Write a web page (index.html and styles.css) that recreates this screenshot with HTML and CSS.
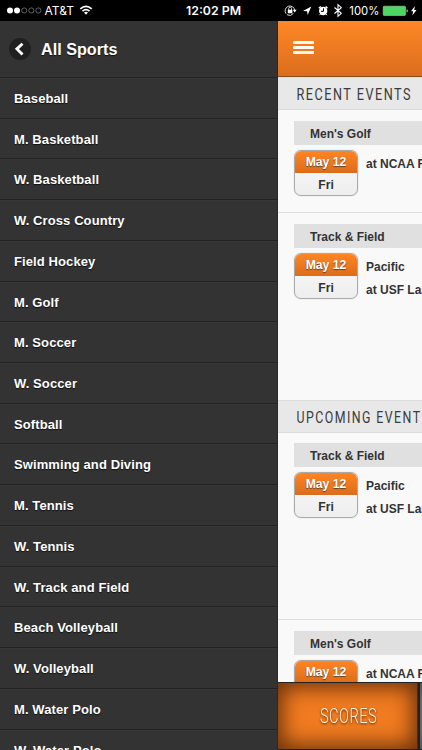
FILE: index.html
```html
<!DOCTYPE html>
<html lang="en">
<head>
<meta charset="utf-8">
<title>All Sports</title>
<link rel="stylesheet" href="styles.css">
</head>
<body>
<header class="status">
  <svg width="422" height="21" viewBox="0 0 422 21" fill="#fff" font-family="Inter, sans-serif" font-size="12">
    <circle cx="10" cy="10.500" r="3"/><circle cx="17" cy="10.500" r="3"/>
    <g fill="none" stroke="#777" stroke-width=".8"><circle cx="24.200" cy="10.500" r="2.600"/><circle cx="31.300" cy="10.500" r="2.600"/><circle cx="38.400" cy="10.500" r="2.600"/></g>
    <text x="44.500" y="15" textLength="29.500" lengthAdjust="spacingAndGlyphs">AT&amp;T</text>
    <g fill="none" stroke="#fff" stroke-width="1.700"><path d="M80.300 8.800Q86 3.800 91.700 8.800M82.500 11.100Q86 8.200 89.500 11.100"/></g>
    <path d="M84 12.500Q86 11 88 12.500L86 14.700Z"/>
    <text x="186" y="15" font-weight="600" textLength="55" lengthAdjust="spacingAndGlyphs">12:02 PM</text>
    <path d="M286 13.600A4.800 4.800 0 1 1 294.700 10.500M293.300 13.500A4.800 4.800 0 0 1 287 14.700" fill="none" stroke="#ddd"/>
    <path d="M292.800 9.800h3.800l-1.900 2.700z"/>
    <path d="M287.800 9.700h4.600v3.600h-4.600z"/><path d="M288.700 10V8.500a1.400 1.400 0 0 1 2.800 0V10" fill="none" stroke="#fff" stroke-width=".8"/>
    <path d="M303 11.100L311.300 6.600 307.700 15 307.100 11.200Z"/>
    <circle cx="323.200" cy="11" r="4.200"/><path d="M319 8.300L320.800 6.500M325.600 6.500L327.400 8.300" stroke="#fff" stroke-width="1.600"/><path d="M320.500 14L319.500 15.200M326 14L327 15.200" stroke="#fff" stroke-width="1"/>
    <path d="M323.500 8.300V11.300H321" fill="none" stroke="#000"/>
    <path d="M334.500 7.500L341.300 13.300 338 16.300V4.700L341.300 7.700 334.500 13.500" fill="none" stroke="#fff" stroke-width="1.100"/>
    <text x="349.300" y="15" textLength="30" lengthAdjust="spacingAndGlyphs">100%</text>
    <rect x="383.200" y="6.200" width="22.300" height="9.300" rx="1" fill="#4cd763" stroke="#b0e3b6" stroke-width=".5"/>
    <path d="M406.500 9.300Q408 9.500 408 11Q408 12.300 406.500 12.500Z" fill="#aaa"/>
    <path d="M415 6L411 11.300H413.200L412.300 15.500 416.500 10H414.200Z"/>
  </svg>
</header>
<main class="app">
  <nav class="menu">
    <div class="menu-title">
      <span class="back"><svg width="22" height="22" viewBox="0 0 22 22"><path d="M13.500 5.700L7.900 10.900 13.500 16.600" fill="none" stroke="#fff" stroke-width="2.900"/></svg></span>
      <h1>All Sports</h1>
    </div>
    <ul>
      <li>Baseball</li><li>M. Basketball</li><li>W. Basketball</li><li>W. Cross Country</li><li>Field Hockey</li><li>M. Golf</li><li>M. Soccer</li><li>W. Soccer</li><li>Softball</li><li>Swimming and Diving</li><li>M. Tennis</li><li>W. Tennis</li><li>W. Track and Field</li><li>Beach Volleyball</li><li>W. Volleyball</li><li>M. Water Polo</li><li>W. Water Polo</li>
    </ul>
  </nav>
  <section class="page">
    <div class="topbar"><div class="burger"><i></i><i></i><i></i></div></div>
    <div class="events">
      <h2><svg width="144" height="31"><text x="18.500" y="22" textLength="115.500" lengthAdjust="spacingAndGlyphs">RECENT EVENTS</text></svg></h2>
      <article class="event first">
        <h3>Men's Golf</h3>
        <div class="row"><div class="date"><b>May 12</b><span>Fri</span></div><div class="info"><p>at NCAA Regionals</p></div></div>
      </article>
      <article class="event second">
        <h3>Track &amp; Field</h3>
        <div class="row"><div class="date"><b>May 12</b><span>Fri</span></div><div class="info"><p>Pacific</p><p>at USF Last Chance</p></div></div>
      </article>
      <h2 class="upcoming"><svg width="144" height="31"><text x="18.500" y="21.500" textLength="125" lengthAdjust="spacingAndGlyphs">UPCOMING EVENT</text></svg></h2>
      <article class="event third">
        <h3>Track &amp; Field</h3>
        <div class="row"><div class="date"><b>May 12</b><span>Fri</span></div><div class="info"><p>Pacific</p><p>at USF Last Chance</p></div></div>
      </article>
      <article class="event fourth">
        <h3>Men's Golf</h3>
        <div class="row"><div class="date"><b>May 12</b><span>Fri</span></div><div class="info"><p>at NCAA Regionals</p></div></div>
      </article>
    </div>
    <footer class="tabs">
      <div class="tab"><svg width="139" height="66"><text x="42" y="40" textLength="57" lengthAdjust="spacingAndGlyphs">SCORES</text></svg></div>
      <div class="tab next"></div>
    </footer>
  </section>
</main>
</body>
</html>
```
FILE: styles.css
```css
* { box-sizing: border-box; }
body {
  margin: 0;
  width: 422px;
  height: 750px;
  overflow: hidden;
  background: #000;
  font-family: "Liberation Sans", Arial, sans-serif;
}
h1, h2, h3, p, ul { margin: 0; padding: 0; }
svg { display: block; }
.status { height: 21px; }
.app { display: flex; height: 729px; overflow: hidden; }
.menu {
  width: 278px;
  flex: none;
  background: #333;
  color: #fff;
  border-right: 1px solid #292929;
}
.menu-title {
  height: 56px;
  padding: 0 0 0 9px;
  display: flex;
  align-items: center;
  gap: 10px;
}
.menu-title h1 { font-size: 16.2px; line-height: 20px; text-shadow: 0 1px 1px #111; }
.back { width: 22px; height: 22px; border-radius: 50%; background: #202020; }
ul { list-style: none; }
li {
  height: 40.73px;
  line-height: 41px;
  padding-left: 14px;
  border-top: 1px solid #222;
  box-shadow: inset 0 1px #373737;
  font-size: 13px;
  letter-spacing: .1px;
  font-weight: bold;
  text-shadow: 0 1px 1px #111;
}
.page { flex: 1; min-width: 0; display: flex; flex-direction: column; background: #f9f9f9; }
.topbar {
  height: 56px;
  flex: none;
  padding: 20px 0 0 15px;
  background: linear-gradient(#ff8828, #db6d1c);
  border-bottom: 1px solid #87501f;
}
.burger { width: 21px; display: flex; flex-direction: column; gap: 2px; }
.burger i { height: 3px; border-radius: 1px; background: #fff9f0; }
.events { height: 605px; flex: none; overflow: hidden; color: #333; }
h2 {
  height: 33px;
  background: #e8e8e8;
  border-top: 1px solid #ddd;
  border-bottom: 1px solid #dcdcdc;
  font-weight: normal;
}
h2 text { font: 400 17px Roboto, sans-serif; letter-spacing: 2px; fill: #3b3b3b; }
.event { padding-left: 16px; border-bottom: 1px solid #ddd; }
.first { height: 103px; padding-top: 11px; }
.second { height: 187px; padding-top: 11px; border: 0; }
.third { height: 187px; padding-top: 10px; }
.fourth { height: 100px; padding-top: 11px; }
h3 {
  height: 24px;
  padding-left: 16px;
  background: #e0e0e0;
  font-size: 12px;
  line-height: 26px;
}
.row { display: flex; gap: 8px; padding-top: 5px; white-space: nowrap; }
.date {
  width: 64px;
  height: 46px;
  flex: none;
  border: 1px solid #aaa;
  border-radius: 7px;
  overflow: hidden;
  text-align: center;
  background: linear-gradient(#fafafa, #eee);
  box-shadow: 0 0 1px #aaa;
  font-size: 12.2px;
  font-weight: bold;
}
.date b { display: block; height: 22px; line-height: 23px; color: #fff; background: linear-gradient(#ff8524, #dc6c1a); text-shadow: 0 1px 1px #543; }
.date span { display: block; line-height: 24px; }
.info { font-size: 12px; font-weight: bold; line-height: 23px; padding-top: 3px; }
.tabs { height: 68px; flex: none; display: flex; border-top: 1px solid #222; background: #25211e; }
.tab {
  width: 140px;
  height: 66px;
  flex: none;
  border-right: 1px solid #333;
  background: #f17b20;
  box-shadow: inset 0 0 20px 5px #6d340b;
}
.tab text { font: 300 19.5px Roboto, sans-serif; letter-spacing: .5px; fill: #fff0d8; filter: drop-shadow(0 1px 1px #4b2507); }
.tab.next { background: #999; box-shadow: inset 0 0 18px 3px #444; margin-left: 2px; }
```
